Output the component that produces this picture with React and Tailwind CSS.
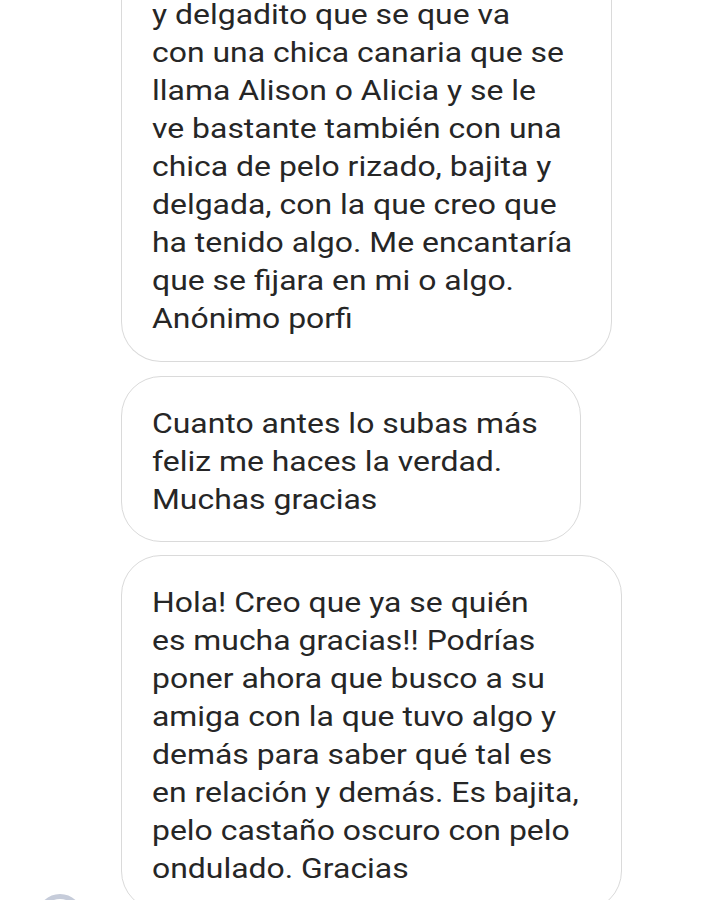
import React from "react";

const messages = [
  {
    id: 1,
    width: "w-[491px]",
    gap: "-mt-[4px]",
    cut: true,
    lines: [
      "y delgadito que se que va",
      "con una chica canaria que se",
      "llama Alison o Alicia y se le",
      "ve bastante también con una",
      "chica de pelo rizado, bajita y",
      "delgada, con la que creo que",
      "ha tenido algo. Me encantaría",
      "que se fijara en mi o algo.",
      "Anónimo porfi",
    ],
  },
  {
    id: 2,
    width: "w-[460px]",
    gap: "mt-[14px]",
    lines: [
      "Cuanto antes lo subas más",
      "feliz me haces la verdad.",
      "Muchas gracias",
    ],
  },
  {
    id: 3,
    width: "w-[501px]",
    gap: "mt-[13px]",
    avatar: true,
    lines: [
      "Hola! Creo que ya se quién",
      "es mucha gracias!! Podrías",
      "poner ahora que busco a su",
      "amiga con la que tuvo algo y",
      "demás para saber qué tal es",
      "en relación y demás. Es bajita,",
      "pelo castaño oscuro con pelo",
      "ondulado. Gracias",
    ],
  },
];

function Bubble({ msg }) {
  return (
    <div
      className={
        msg.cut
          ? `${msg.width} rounded-b-[40px] border-x-[1.5px] border-b-[1.5px] border-[#dadada] bg-white pl-[30px] pr-10 pb-[23px]`
          : `${msg.width} rounded-[40px] border-[1.5px] border-[#dadada] bg-white pl-[30px] pr-10 pt-[28px] pb-[22px]`
      }
    >
      <div className="origin-left scale-x-[1.14]">
        {msg.lines.map((line, i) => (
          <div key={i} className="whitespace-nowrap">
            {line}
          </div>
        ))}
      </div>
    </div>
  );
}

export default function App() {
  return (
    <div className="h-[900px] overflow-hidden bg-white font-['Roboto',sans-serif] text-[28px] leading-[38px] text-[#262626]">
      <div className="flex flex-col">
        {messages.map((msg) => (
          <div key={msg.id} className={`flex items-start ${msg.gap}`}>
            <div className="w-[121px] shrink-0 pl-[37px]">
              {msg.avatar && (
                <div className="mt-[339px] h-[46px] w-[46px] rounded-full border-[5px] border-[#c6ccda] bg-white" />
              )}
            </div>
            <Bubble msg={msg} />
          </div>
        ))}
      </div>
    </div>
  );
}
